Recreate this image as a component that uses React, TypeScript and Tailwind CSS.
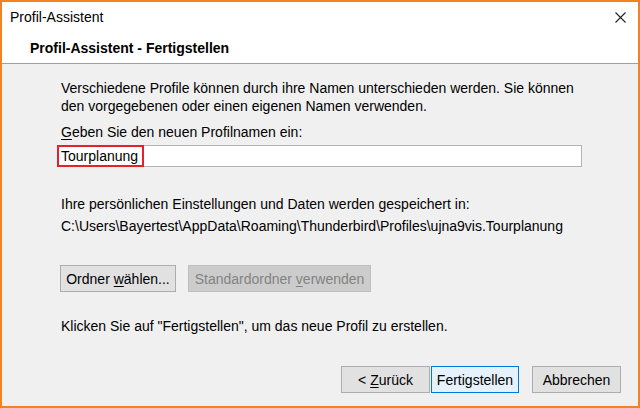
export default function App() {
  const font = { fontFamily: '"Liberation Sans", Arial, sans-serif' };
  return (
    <div
      className="w-[640px] h-[408px] border-2 border-[#f58220] flex flex-col bg-[#f0f0f0] text-black text-[14px] leading-[18px] whitespace-nowrap"
      style={font}
    >
      <div className="bg-white border-b border-[#a0a0a0]">
        <div className="h-[30px] flex items-center justify-between pl-[8px] pr-[12px]">
          <span>Profil-Assistent</span>
          <svg width="11" height="11" viewBox="0 0 11 11" className="text-[#222]">
            <path d="M0.5 0.5 L10.5 10.5 M10.5 0.5 L0.5 10.5" stroke="currentColor" strokeWidth="1.1" />
          </svg>
        </div>
        <div className="h-[31px] flex items-center pl-[28px] font-bold">
          Profil-Assistent - Fertigstellen
        </div>
      </div>

      <div className="flex-1 flex flex-col pl-[59px] pr-[17px] pt-[15px]">
        <p>
          Verschiedene Profile können durch ihre Namen unterschieden werden. Sie können
          <br />
          den vorgegebenen oder einen eigenen Namen verwenden.
        </p>
        <p className="mt-[8px]">
          <span className="underline underline-offset-2">G</span>eben Sie den neuen Profilnamen ein:
        </p>
        <div className="relative mt-[4px] -ml-[4px] w-[525px] h-[22px] bg-white border border-[#b4b4b4] flex items-center pl-[3px]">
          <span>Tourplanung</span>
          <div className="absolute -left-px -top-px w-[87px] h-[22px] border-2 border-[#e8202a]" />
        </div>
        <p className="mt-[28px]">Ihre persönlichen Einstellungen und Daten werden gespeichert in:</p>
        <p className="mt-[4px]">C:\Users\Bayertest\AppData\Roaming\Thunderbird\Profiles\ujna9vis.Tourplanung</p>

        <div className="mt-[30px] flex items-center gap-[12px] -ml-px">
          <button className="h-[27px] w-[116px] bg-[#e1e1e1] border border-[#adadad]">
            Ordner <span className="underline underline-offset-2">w</span>ählen...
          </button>
          <button className="h-[27px] w-[183px] bg-[#cccccc] border border-[#bfbfbf] text-[#838383]" disabled>
            Standardordner <span className="underline underline-offset-2">v</span>erwenden
          </button>
        </div>

        <p className="mt-[25px]">Klicken Sie auf "Fertigstellen", um das neue Profil zu erstellen.</p>

        <div className="mt-[31px] flex justify-end items-center">
          <button className="h-[27px] w-[89px] bg-[#e1e1e1] border border-[#adadad]">
            &lt; <span className="underline underline-offset-2">Z</span>urück
          </button>
          <button className="ml-px h-[27px] w-[88px] bg-[#e5f1fb] border border-[#0078d7]">
            Fertigstellen
          </button>
          <button className="ml-[13px] h-[27px] w-[89px] bg-[#e1e1e1] border border-[#adadad]">
            Abbrechen
          </button>
        </div>
      </div>
    </div>
  );
}
